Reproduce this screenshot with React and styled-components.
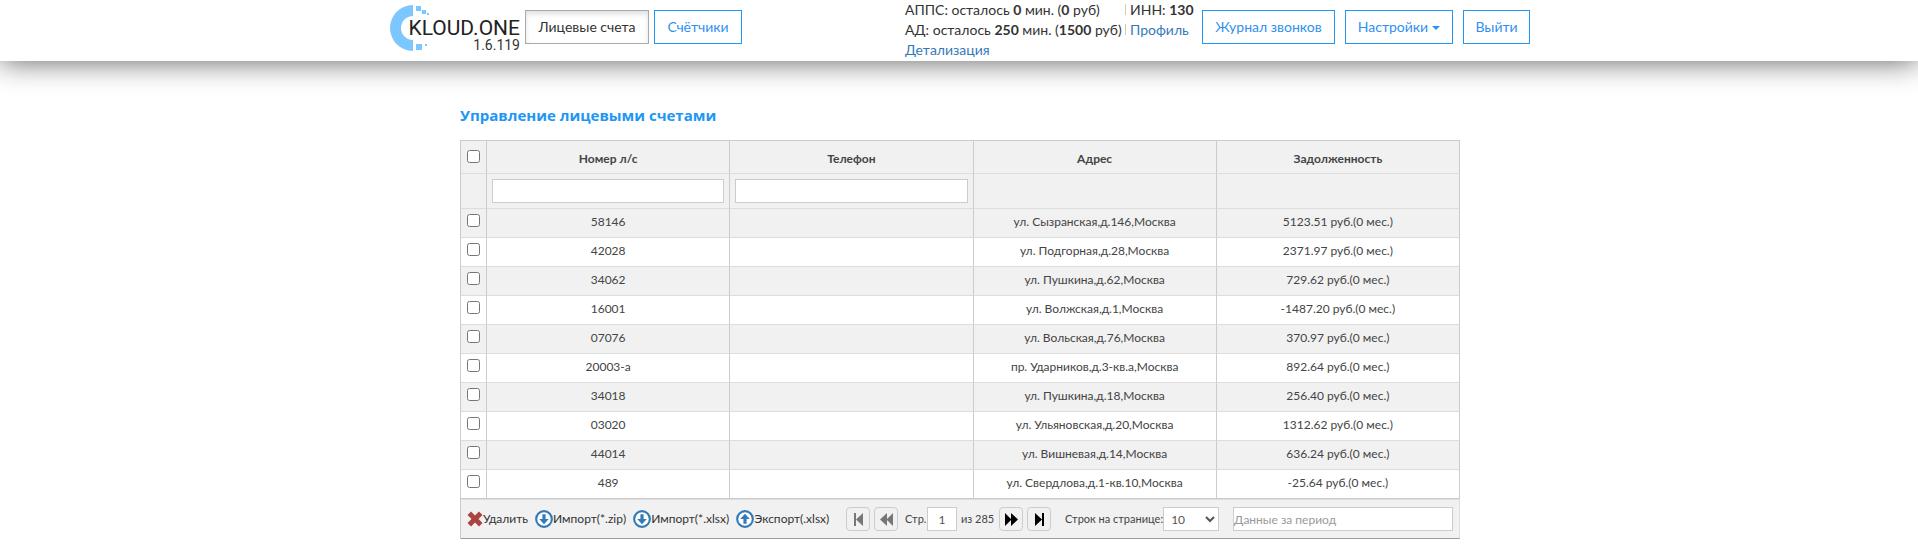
import React from 'react';
import styled, { createGlobalStyle } from 'styled-components';

const Global = createGlobalStyle`
  *, *::before, *::after { box-sizing: border-box; }
  body {
    margin: 0;
    background: #fff;
    color: #333;
    font: 14px/20px Lato, "Open Sans", sans-serif;
  }
  input, button, select { font-family: inherit; margin: 0; }
`;

const Header = styled.header`
  background: #fff;
  box-shadow: 0 0 30px rgba(0, 0, 0, 0.65);
`;

const HeaderInner = styled.div`
  display: flex;
  align-items: flex-start;
  justify-content: space-between;
  min-height: 61px;
  max-width: 1170px;
  margin: 0 auto;
  padding: 0 14px 0 16px;
`;

const Nav = styled.nav`
  display: flex;
  gap: 5px;
`;

const Brand = styled.a`
  position: relative;
  display: block;
  width: 130px;
  height: 52px;
  color: #222;
  text-decoration: none;
`;

const BrandMark = styled.svg`
  display: block;
  width: 40px;
  height: 52px;
`;

const BrandText = styled.span`
  position: absolute;
  top: 16px;
  right: 0;
  text-align: right;
  font: 21px/24px Roboto, sans-serif;
`;

const Version = styled.span`
  display: block;
  color: #333;
  font: 14px/10px Roboto, sans-serif;
`;

const NavButton = styled.button`
  height: 34px;
  min-width: ${p => p.$width};
  margin-top: 10px;
  padding: 0 11px;
  border: 1px solid ${p => (p.$active ? '#a9a9a9' : '#2196f3')};
  background: #fff;
  box-shadow: ${p => (p.$active ? 'inset 0 3px 5px rgba(0, 0, 0, 0.125)' : 'none')};
  color: ${p => (p.$active ? '#333' : '#2f8ff3')};
  font-size: 14px;
  line-height: 20px;
  white-space: nowrap;
`;

const Caret = styled.span`
  display: inline-block;
  margin-left: 4px;
  vertical-align: middle;
  border-top: 4px solid;
  border-left: 4px solid transparent;
  border-right: 4px solid transparent;
`;

const Account = styled.div`
  display: flex;
  gap: 10px;
`;

const Balance = styled.div`
  display: grid;
  grid-template-columns: 219px 68px;
  white-space: nowrap;
`;

const Link = styled.a`
  color: #337ab7;
  text-decoration: none;
`;

const Bar = styled.span`
  display: inline-block;
  width: 1px;
  height: 11px;
  margin: 0 4px 0 1px;
  background: #d8c9b4;
`;

const Main = styled.main`
  max-width: 1002px;
  margin: 0 auto;
  padding: 43px 0 0 2px;
`;

const Title = styled.h1`
  margin: 0 0 13px;
  color: #2196f3;
  font: 700 15px/23px "Open Sans", sans-serif;
`;

const Panel = styled.section`
  border: 1px solid #ccc;
  border-width: 1px 0 0 1px;
`;

const Table = styled.table`
  width: 100%;
  table-layout: fixed;
  border-collapse: separate;
  border-spacing: 0;
  color: #444;
  font-size: 12px;
  line-height: 16px;
  text-align: center;
`;

const CheckCol = styled.col`
  width: 26px;
`;

const HeadRow = styled.tr`
  height: ${p => p.$height};
  background: #f1f1f1;
`;

const Cell = styled.td`
  padding: 0 5px;
  border-right: 1px solid #ccc;
  border-bottom: 1px solid #ddd;
`;

const HeadCell = styled(Cell).attrs({ as: 'th', scope: 'col' })`
  padding-top: 4px;
  font-weight: 700;
`;

const DataCell = styled(Cell)`
  padding-bottom: 2px;
`;

const Row = styled.tr`
  height: 29px;
  background: #fff;
  &:nth-child(odd) { background: #f1f1f1; }
  &:last-child td { border-bottom-color: #ccc; }
`;

const CheckCell = styled(Cell)`
  padding: ${p => p.$top || '5px'} 0 0;
  vertical-align: top;
`;

const Check = styled.input.attrs({ type: 'checkbox' })`
  display: block;
  width: 13px;
  height: 13px;
  margin: 0 auto;
`;

const TextField = styled.input.attrs({ type: 'text' })`
  display: block;
  width: 100%;
  height: 24px;
  padding: 0;
  border: 1px solid #ccc;
  background: #fff;
  color: #555;
  font-size: 12px;
  &::placeholder { color: #999; opacity: 1; }
`;

const PageField = styled(TextField)`
  width: 30px;
  text-align: center;
`;

const Toolbar = styled.div`
  display: grid;
  grid-template-columns: 379px 219px 168px 1fr;
  align-items: center;
  height: 40px;
  padding: 0 6px;
  border: 1px solid #ddd;
  border-left: 0;
  border-bottom-color: #999;
  background: #f1f1f1;
  color: #444;
  font-size: 12px;
  line-height: 16px;
`;

const Actions = styled.div`
  display: flex;
  gap: 7px;
`;

const Action = styled.button`
  display: flex;
  align-items: center;
  padding: 0;
  border: 0;
  background: none;
  color: #333;
  font-size: 12px;
  line-height: 18px;
  white-space: nowrap;
`;

const Pager = styled.div`
  display: flex;
  align-items: center;
  gap: 4px;
`;

const PageLabel = styled.label`
  display: flex;
  align-items: center;
  justify-content: space-between;
  width: 52px;
  margin-left: 3px;
  font-size: 11px;
`;

const PageTotal = styled.span`
  width: 34px;
  font-size: 11px;
  white-space: nowrap;
`;

const PageButton = styled.button`
  display: flex;
  align-items: center;
  justify-content: center;
  width: 24px;
  height: 24px;
  padding: 0;
  border: 1px solid #ccc;
  border-radius: 4px;
  background: #f1f1f1;
  color: ${p => (p.disabled ? '#777' : '#000')};
`;

const SizeLabel = styled.label`
  display: flex;
  align-items: center;
  font-size: 11px;
  white-space: nowrap;
`;

const SizeSelect = styled.select`
  width: 56px;
  height: 24px;
  padding: 0 0 0 3px;
  border: 1px solid #ccc;
  border-radius: 0;
  background: #fff;
  color: #555;
  font-size: 12px;
`;

const Cross = () => (
  <svg width="16" height="16" viewBox="0 0 16 16" aria-hidden="true">
    <path d="M4 .5 8 4.5 12 .5 15.5 4 11.5 8 15.5 12 12 15.5 8 11.5 4 15.5 .5 12 4.5 8 .5 4Z" fill="#a94442" />
  </svg>
);

const CircleArrow = ({ up }) => (
  <svg width="18" height="18" viewBox="0 0 17 17" aria-hidden="true">
    <circle cx="8.5" cy="8.5" r="7.4" fill="#fff" stroke="#337ab7" strokeWidth="2" />
    <path
      d={up ? 'M8.5 3.5 13 8.5H10V13H7V8.5H4Z' : 'M8.5 13.5 13 8.5H10V4H7V8.5H4Z'}
      fill="#337ab7"
    />
  </svg>
);

const PAGER_PATHS = {
  first: 'M2 0H4V13H2ZM11 0V13L4 6.5Z',
  prev: 'M7 0V13L0 6.5ZM13 0V13L6.5 6.5Z',
  next: 'M0 0V13L6.5 6.5ZM6 0V13L13 6.5Z',
  last: 'M2 0V13L9 6.5ZM9 0H11V13H9Z',
};

const PagerIcon = ({ kind }) => (
  <svg width="13" height="13" viewBox="0 0 13 13" aria-hidden="true">
    <path d={PAGER_PATHS[kind]} fill="currentColor" />
  </svg>
);

const ROWS = [
  ['58146', 'ул. Сызранская,д.146,Москва', '5123.51 руб.(0 мес.)'],
  ['42028', 'ул. Подгорная,д.28,Москва', '2371.97 руб.(0 мес.)'],
  ['34062', 'ул. Пушкина,д.62,Москва', '729.62 руб.(0 мес.)'],
  ['16001', 'ул. Волжская,д.1,Москва', '-1487.20 руб.(0 мес.)'],
  ['07076', 'ул. Вольская,д.76,Москва', '370.97 руб.(0 мес.)'],
  ['20003-а', 'пр. Ударников,д.3-кв.а,Москва', '892.64 руб.(0 мес.)'],
  ['34018', 'ул. Пушкина,д.18,Москва', '256.40 руб.(0 мес.)'],
  ['03020', 'ул. Ульяновская,д.20,Москва', '1312.62 руб.(0 мес.)'],
  ['44014', 'ул. Вишневая,д.14,Москва', '636.24 руб.(0 мес.)'],
  ['489', 'ул. Свердлова,д.1-кв.10,Москва', '-25.64 руб.(0 мес.)'],
];

export default function App() {
  return (
    <>
      <Global />
      <Header>
        <HeaderInner>
          <Nav>
            <Brand href="#">
              <BrandMark viewBox="0 0 40 52" aria-hidden="true">
                <path d="M23 5V16A12 12 0 0 0 23 40V51A23 23 0 0 1 23 5Z" fill="#7cc7ff" />
                <path d="M26 6h5v5h-5zM32 10h4v4h-4zM37 13h2v2h-2zM26 44h6v6h-6zM35 44h2v2h-2z" fill="#7cc7ff" />
              </BrandMark>
              <BrandText>
                KLOUD.ONE
                <Version>1.6.119</Version>
              </BrandText>
            </Brand>
            <NavButton $active $width="124px">Лицевые счета</NavButton>
            <NavButton $width="88px">Счётчики</NavButton>
          </Nav>
          <Account>
            <Balance>
              <span>АППС: осталось <b>0</b> мин. (<b>0</b> руб)</span>
              <span><Bar />ИНН: <b>130</b></span>
              <span>АД: осталось <b>250</b> мин. (<b>1500</b> руб)</span>
              <span><Bar /><Link href="#profile">Профиль</Link></span>
              <Link href="#details">Детализация</Link>
            </Balance>
            <NavButton $width="133px">Журнал звонков</NavButton>
            <NavButton $width="108px">Настройки<Caret /></NavButton>
            <NavButton $width="67px">Выйти</NavButton>
          </Account>
        </HeaderInner>
      </Header>
      <Main>
        <Title>Управление лицевыми счетами</Title>
        <Panel>
          <Table>
            <colgroup>
              <CheckCol />
              <col span="4" />
            </colgroup>
            <thead>
              <HeadRow $height="33px">
                <CheckCell $top="9px"><Check aria-label="Выбрать все" /></CheckCell>
                <HeadCell>Номер л/с</HeadCell>
                <HeadCell>Телефон</HeadCell>
                <HeadCell>Адрес</HeadCell>
                <HeadCell>Задолженность</HeadCell>
              </HeadRow>
              <HeadRow $height="35px">
                <Cell />
                <Cell><TextField aria-label="Номер л/с" /></Cell>
                <Cell><TextField aria-label="Телефон" /></Cell>
                <Cell />
                <Cell />
              </HeadRow>
            </thead>
            <tbody>
              {ROWS.map(([number, address, debt]) => (
                <Row key={number}>
                  <CheckCell><Check aria-label={number} /></CheckCell>
                  <DataCell>{number}</DataCell>
                  <DataCell />
                  <DataCell>{address}</DataCell>
                  <DataCell>{debt}</DataCell>
                </Row>
              ))}
            </tbody>
          </Table>
          <Toolbar>
            <Actions>
              <Action><Cross />Удалить</Action>
              <Action><CircleArrow />Импорт(*.zip)</Action>
              <Action><CircleArrow />Импорт(*.xlsx)</Action>
              <Action><CircleArrow up />Экспорт(.xlsx)</Action>
            </Actions>
            <Pager>
              <PageButton disabled aria-label="Первая"><PagerIcon kind="first" /></PageButton>
              <PageButton disabled aria-label="Предыдущая"><PagerIcon kind="prev" /></PageButton>
              <PageLabel>Стр.<PageField defaultValue="1" /></PageLabel>
              <PageTotal>из 285</PageTotal>
              <PageButton aria-label="Следующая"><PagerIcon kind="next" /></PageButton>
              <PageButton aria-label="Последняя"><PagerIcon kind="last" /></PageButton>
            </Pager>
            <SizeLabel>
              Строк на странице:
              <SizeSelect defaultValue="10">
                <option>10</option>
                <option>20</option>
                <option>50</option>
              </SizeSelect>
            </SizeLabel>
            <TextField placeholder="Данные за период" aria-label="Данные за период" />
          </Toolbar>
        </Panel>
      </Main>
    </>
  );
}
